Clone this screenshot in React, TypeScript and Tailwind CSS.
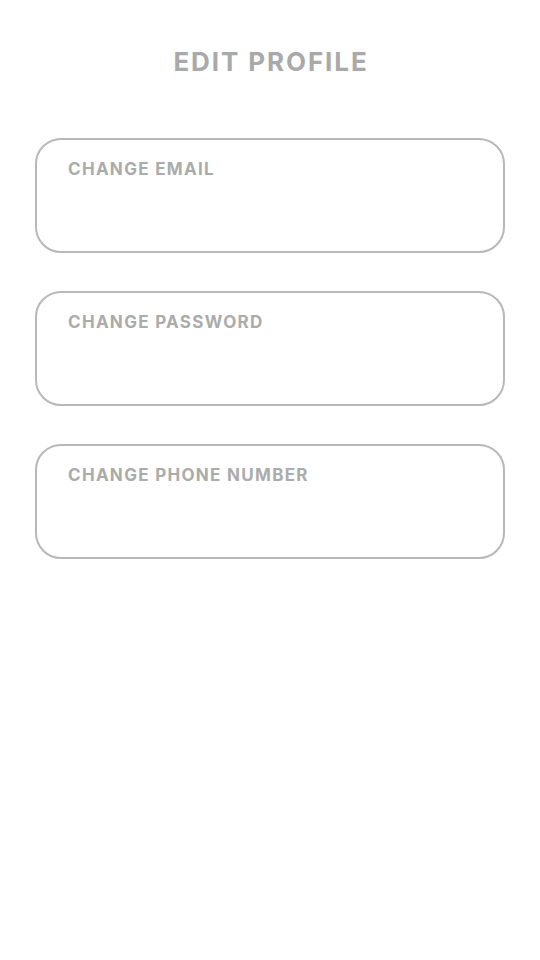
import React from "react";

const fields = ["CHANGE EMAIL", "CHANGE PASSWORD", "CHANGE PHONE NUMBER"];

export default function App() {
  return (
    <div className="min-h-[960px] w-[540px] bg-white flex flex-col items-center" style={{ fontFamily: "Inter, 'Open Sans', sans-serif" }}>
      <h1 className="mt-[45px] h-[34px] text-[26px] leading-[34px] font-bold text-[#a9a9a9] tracking-[1.9px] pl-[2px]">EDIT PROFILE</h1>
      <div className="mt-[59px] flex flex-col gap-[38px] w-full px-[35px]">
        {fields.map((f) => (
          <div key={f} className="h-[115px] rounded-[26px] border-2 border-[#b8b8b8] px-[31px] pt-[17px]">
            <div className="text-[17px] leading-[24px] font-bold text-[#ababab] tracking-[1.3px]">{f}</div>
          </div>
        ))}
      </div>
    </div>
  );
}
